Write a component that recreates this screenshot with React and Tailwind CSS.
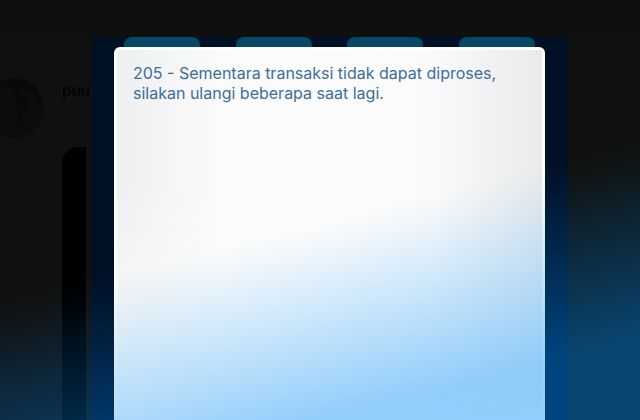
import React from "react";

const tabs = [1, 2, 3, 4];

// Dimmed chat screen that stays visible on the left
const ChatBackdrop = () => {
  return (
    <aside className="flex w-[92px] shrink-0 flex-col bg-[#101010] pt-10">
      <div className="flex h-[62px] shrink-0">
        <svg className="h-[62px] w-[62px] shrink-0" viewBox="0 0 62 62" aria-hidden="true">
          <circle cx="14" cy="31" r="30" fill="#0d0b0b" />
          <path d="M-4 10Q12-6 32 8Q42 18 42 29Q34 12 21 13L20 31L19 61L18 34L14 12Z" fill="#0a0808" />
          <path d="M21 20Q31 23 27 36Q23 35 21 28Z" fill="#090707" />
        </svg>
        <span className="pt-1 font-['Inter','Liberation_Sans',sans-serif] text-[15px] leading-5 font-bold text-[#040505]">puu</span>
      </div>
      <div className="mt-2 ml-[62px] w-6 flex-1 rounded-tl-2xl bg-black"></div>
    </aside>
  );
};

const MessageDialog = () => {
  return (
    <section
      role="alertdialog"
      aria-labelledby="dialog-message"
      className="flex-1 rounded-t-md border-3 border-b-0 border-white bg-[linear-gradient(to_bottom,transparent_35%,#fcfcfc),linear-gradient(to_right,#eef0ef,#fafbfa_25%,#fcfcfc_50%,#fafafa_75%,#eaeaea)] px-4 pt-[13px]"
    >
      <p id="dialog-message" className="max-w-[376px] font-['Inter','Liberation_Sans',sans-serif] text-base leading-5 text-[#386fa2]">
        205 - Sementara transaksi tidak dapat diproses, silakan ulangi beberapa saat lagi.
      </p>
    </section>
  );
};

const App = () => {
  return (
    <div className="relative flex min-h-screen flex-col bg-[#101010]">
      <header className="h-[37px] bg-[#0f0f0f]"></header>
      <main className="flex flex-1">
        <ChatBackdrop />
        <div className="flex min-w-0 flex-1 flex-col bg-[#001126] pr-[23px] pl-[22px]">
          <div className="flex justify-between px-[10px]">
            {tabs.map((tab) => (
              <div key={tab} className="h-[10px] w-[76px] rounded-t-lg bg-[#02496a]"></div>
            ))}
          </div>
          <MessageDialog />
        </div>
        <div className="w-[72px] shrink-0 bg-[#0f110e]"></div>
      </main>
      {/* Blue light over the whole screen */}
      <div className="pointer-events-none absolute inset-0 bg-[linear-gradient(166deg,transparent_52%,rgba(0,141,249,0.05)_57%,rgba(0,141,249,0.42)_86%)]"></div>
    </div>
  );
};

export default App;
